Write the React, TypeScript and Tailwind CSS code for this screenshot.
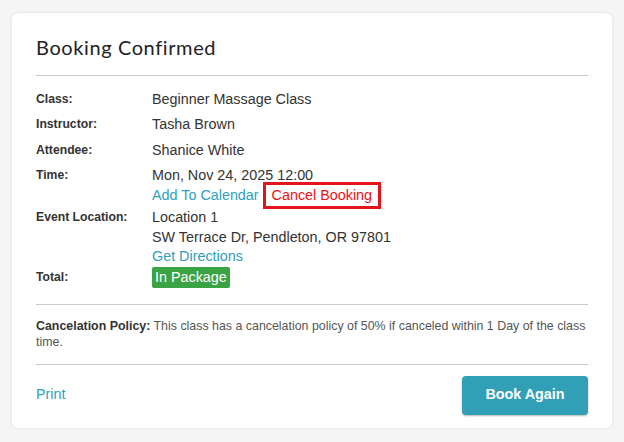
import React from "react";

const Row = ({ label, children, mb }: { label: string; children: React.ReactNode; mb: string }) => (
  <div className={`flex ${mb}`}>
    <div className="w-[116px] shrink-0 text-[12.2px] font-bold leading-5 text-[#333]">{label}</div>
    <div className="text-[14.35px] leading-5 text-[#333]">{children}</div>
  </div>
);

export default function App() {
  return (
    <div className="min-h-[442px] bg-[#f5f5f5] px-[12px] pt-[13px] pb-[14px]" style={{ fontFamily: '"Liberation Sans", Arial, sans-serif' }}>
      <div className="rounded-[6px] bg-white px-[24px] pt-[20px] pb-[13px] shadow-[0_0_3px_rgba(0,0,0,0.12)]">
        <h1 className="text-[20px] leading-7 tracking-[0.6px] text-[#222]" style={{ fontFamily: 'Lato, "Open Sans", sans-serif' }}>
          Booking Confirmed
        </h1>
        <div className="mt-[14px] border-t border-[#cccccc]" />
        <div className="pt-[13px]">
          <Row label="Class:" mb="mb-[5px]">Beginner Massage Class</Row>
          <Row label="Instructor:" mb="mb-[5.5px]">Tasha Brown</Row>
          <Row label="Attendee:" mb="mb-[5px]">Shanice White</Row>
          <Row label="Time:" mb="mb-[1px]">
            <div>Mon, Nov 24, 2025 12:00</div>
            <div className="flex items-center">
              <span className="text-[#329fbb]">Add To Calendar</span>
              <span className="ml-[4px] -my-[3px] border-[3px] border-[#e3141b] px-[6px] leading-[21px] text-[#ee1111]">Cancel Booking</span>
            </div>
          </Row>
          <Row label="Event Location:" mb="mb-[0.5px]">
            <div>Location 1</div>
            <div>SW Terrace Dr, Pendleton, OR 97801</div>
            <div className="-mt-[0.5px] text-[#329fbb]">Get Directions</div>
          </Row>
          <Row label="Total:" mb="mb-0">
            <span className="inline-block rounded-[2px] bg-[#3ba344] px-[3px] leading-[21px] text-white">In Package</span>
          </Row>
        </div>
        <div className="mt-[16px] border-t border-[#cccccc]" />
        <p className="pt-[13px] pb-[14px] text-[12.4px] leading-4 text-[#555]">
          <span className="font-bold text-[#333]">Cancelation Policy:</span> This class has a cancelation policy of 50% if canceled within 1 Day of the class time.
        </p>
        <div className="border-t border-[#cccccc]" />
        <div className="mt-[11px] flex items-center justify-between">
          <span className="-mt-[1px] text-[14.35px] text-[#329fbb]">Print</span>
          <button className="h-[39px] w-[126px] rounded-[4px] bg-[#319fb5] text-[14.35px] font-bold text-white shadow-[0_1px_2px_rgba(0,0,0,0.3)]">
            Book Again
          </button>
        </div>
      </div>
    </div>
  );
}
